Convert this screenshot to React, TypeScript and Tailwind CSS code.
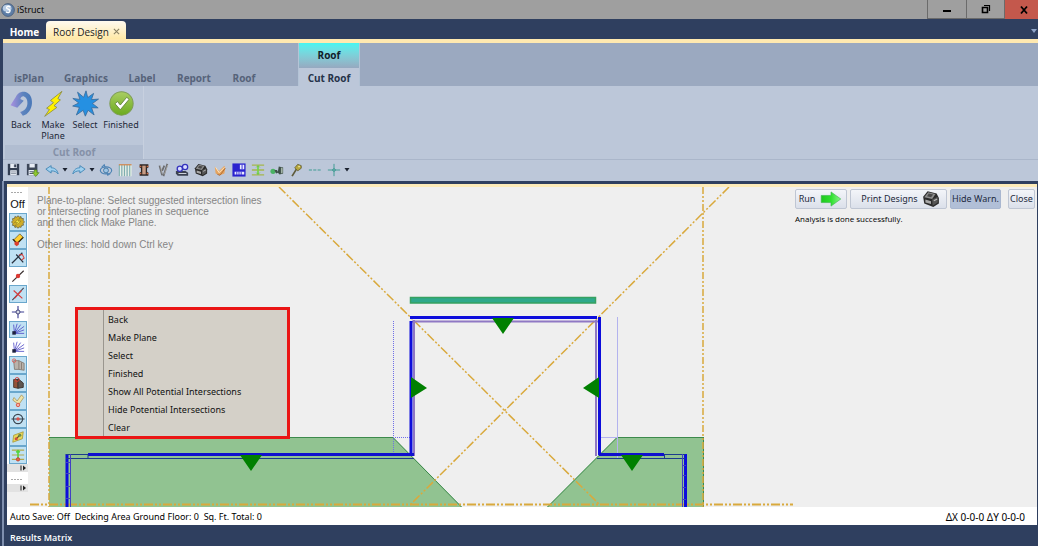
import type { ReactNode } from "react";
import { clsx } from "clsx";

function Icon({ children, className = "size-4" }: { children: ReactNode; className?: string }) {
  return (
    <svg viewBox="0 0 16 16" className={className} fill="none" aria-hidden="true">
      {children}
    </svg>
  );
}

function PrinterShape() {
  return (
    <>
      <path d="M1 6 5 1l8 2 2 4v5l-5 3-8-3z" fill="#2b2b2b" />
      <path d="M2 6.500 5.500 2l6.500 1.500L9 8z" fill="#8d8d8d" />
      <path d="M9 8.500 14 6v5l-4.500 3z" fill="#555" />
      <path d="M3 8.500 8 10v2.500L3 11z" fill="#a9a9a9" />
      <path d="m6 3 4 1-2 2.500-3.500-1z" fill="#4a4a4a" />
      <path d="m10.500 9.500 3-1.500" stroke="#bbb" />
    </>
  );
}

const quickTools: { label: string; drawing: ReactNode }[] = [
  {
    label: "Orbit",
    drawing: (
      <>
        <ellipse cx="8" cy="8.500" rx="6.500" ry="4" stroke="#4b82b4" strokeWidth="1.300" />
        <circle cx="8" cy="8.500" r="2.800" fill="#9cc4e4" stroke="#3a719f" />
        <path d="M3 5 6 2l1 3M13 12l-3 2-1-3" stroke="#4b82b4" strokeWidth="1.200" />
      </>
    ),
  },
  {
    label: "Studs",
    drawing: (
      <>
        <path d="M2.500 2v13M5.500 2v13M8.500 2v13M11.500 2v13M14.500 2v13" stroke="#e9f1e6" strokeWidth="2" />
        <path d="M1.500 2v13M4.500 2v13M7.500 2v13M10.500 2v13M13.500 2v13" stroke="#6aa5a3" />
        <path d="M1 2h14.500" stroke="#d08a56" strokeWidth="1.500" />
      </>
    ),
  },
  {
    label: "Post",
    drawing: (
      <>
        <path d="M3 1.500h10V5l-1.500 1v4l1.500 1v3.500H3V11l1.500-1V6L3 5z" fill="#2b2624" />
        <path d="M6 3h4v10H6z" fill="#c79b83" />
        <path d="M3 4h2M11 4h2M3 12h2M11 12h2" stroke="#c96b45" strokeWidth="1.500" />
      </>
    ),
  },
  {
    label: "Braces",
    drawing: (
      <>
        <path d="m4 3 3 11M13 1 8.500 15M9.500 3 7 9" stroke="#6c6d70" strokeWidth="2" />
        <path d="m5 3 2 9M13.500 2 9.500 13" stroke="#bdb8ae" strokeWidth=".7" />
      </>
    ),
  },
  {
    label: "Loads",
    drawing: (
      <>
        <path d="M1 9h11l3 2v3.500H3L1 12z" fill="#3b4250" />
        <path d="M4 12h9" stroke="#e1e6ee" />
        <circle cx="5.500" cy="6.500" r="3" fill="#d9ddff" stroke="#3432bd" strokeWidth="1.500" />
        <circle cx="11.500" cy="4.500" r="3" fill="#d9ddff" stroke="#3432bd" strokeWidth="1.500" />
      </>
    ),
  },
  { label: "Print", drawing: <PrinterShape /> },
  {
    label: "Connector",
    drawing: (
      <>
        <path d="m2 4 5 5 6-6 1 3-1 6-5 2-5-2z" fill="#e4a35f" />
        <path d="m3 5 4 6 6-6" stroke="#fff0d5" />
        <path d="m5 13 3 1 6-8" stroke="#a9642b" />
      </>
    ),
  },
  {
    label: "Plan view",
    drawing: (
      <>
        <rect x=".5" y=".5" width="15" height="15" fill="#2a22cf" />
        <path d="M9 2h5v5H9zM3 10h11v3H3z" fill="#e9eaff" />
        <path d="M11.500 2v5M5.500 10v4M8 10v4M10.500 10v4" stroke="#2a22cf" />
      </>
    ),
  },
  {
    label: "Floor section",
    drawing: (
      <>
        <path d="M1 2.500h14M1 8h14M1 13.500h14" stroke="#a5b84c" strokeWidth="1.500" />
        <path d="M8 3v10" stroke="#76d44b" strokeWidth="2" />
        <path d="m6 5 2-2 2 2M6 11l2 2 2-2" stroke="#6cc23f" />
      </>
    ),
  },
  {
    label: "Blocks",
    drawing: (
      <>
        <circle cx="3.500" cy="9.500" r="3" fill="#4bb264" />
        <path d="M5 8h3l1 2 1-6 5 1v7l-4 1-2-2-2 1z" fill="#3f5148" />
        <path d="m12.500 5 2 1v5l-2 1z" fill="#a3b3a7" />
      </>
    ),
  },
  {
    label: "Screwdriver",
    drawing: (
      <>
        <path d="m3.500 15 5-8" stroke="#5e5a3a" strokeWidth="2" />
        <path d="m6.500 5.500 3.500-4 4 1.500v3l-4 3z" fill="#b5a63c" stroke="#57522c" strokeWidth=".8" />
        <circle cx="11.500" cy="4" r="1" fill="#f0e7a0" />
      </>
    ),
  },
  {
    label: "Dashed line",
    drawing: <path d="M1 8h14" stroke="#3f9b93" strokeWidth="1.200" strokeDasharray="3.500 1.500" />,
  },
  {
    label: "Crosshair",
    drawing: <path d="M1 8h14M8 1v14M6 8l2-2 2 2-2 2z" stroke="#3f9b93" strokeWidth="1.100" />,
  },
];

function Rays() {
  return (
    <>
      <path d="M4 13 3 3M4 13 7 2M4 13l7-10M4 13l11-8M4 13l11-4M4 13h11" stroke="#4a45c4" strokeWidth=".9" />
      <rect x="1.500" y="10.500" width="4" height="4" fill="#1f2240" />
    </>
  );
}

const sideTools: { label: string; active: boolean; drawing: ReactNode }[] = [
  {
    label: "Snap settings",
    active: true,
    drawing: (
      <>
        <path
          d="m8 .8 1.300 1.700 2.100-.8.500 2.200 2.300.2-.4 2.200 1.700 1.600-1.700 1.500.5 2.200-2.200.4-.6 2.100-2.200-.5L8 15.200l-1.400-1.700-2.100.8-.6-2.200-2.200-.2.400-2.300L.6 8l1.500-1.500-.4-2.300 2.300-.3.500-2.200 2.100.8z"
          fill="#d0ad28"
          stroke="#6b6543"
          strokeWidth=".9"
        />
        <path d="m11 3-7 5.500h3.500L4.500 13l7-6H8z" fill="#fff04a" stroke="#7d6e1d" strokeWidth=".6" />
      </>
    ),
  },
  {
    label: "Endpoint",
    active: true,
    drawing: (
      <>
        <path d="m3 8 7-7 4 4-7 7z" fill="#ffce2e" stroke="#5a4a18" strokeWidth=".8" />
        <path d="m2 7 5 5 7-7" stroke="#33290e" strokeWidth="1.500" />
        <path d="M4 10h5v3l-2.500 2L4 13z" fill="#d93f30" />
      </>
    ),
  },
  {
    label: "Perpendicular",
    active: true,
    drawing: (
      <>
        <path d="M1 14 13 2M6 4l8 9" stroke="#27313f" strokeWidth="1.400" />
        <path d="m9 4.500 4-.5 2 4-3 2.500" stroke="#d6413e" strokeWidth="1.200" />
      </>
    ),
  },
  {
    label: "Midpoint",
    active: false,
    drawing: (
      <>
        <path d="M1.500 14.500 14.500 2" stroke="#3b3030" strokeWidth="1.300" />
        <circle cx="8" cy="8" r="2.500" fill="#dd3a34" />
      </>
    ),
  },
  {
    label: "Intersection",
    active: true,
    drawing: (
      <>
        <path d="M1.500 15 14.500 1" stroke="#3e4150" strokeWidth="1.200" />
        <path d="m3 4 10 9M4 13l8-9" stroke="#d93c3c" strokeWidth="1.300" />
      </>
    ),
  },
  {
    label: "Node",
    active: false,
    drawing: (
      <>
        <path d="M8 1v14M1 8h14" stroke="#3d3f94" strokeWidth="1.300" />
        <circle cx="8" cy="8" r="2.300" fill="#d8dbe6" stroke="#34356d" />
      </>
    ),
  },
  { label: "Angle snap", active: true, drawing: <Rays /> },
  { label: "Angle guide", active: false, drawing: <Rays /> },
  {
    label: "Wall outline",
    active: true,
    drawing: (
      <>
        <path d="M3 3h6l6 3v8l-6-1H4z" fill="#b9b2ab" stroke="#74695f" strokeWidth=".8" />
        <path d="M9 3v10M12 5v8" stroke="#857970" />
        <circle cx="3.500" cy="3" r="2" stroke="#df5b55" />
      </>
    ),
  },
  {
    label: "Wall solid",
    active: true,
    drawing: (
      <>
        <path d="M3 4h5v10l-5-1z" fill="#93543a" stroke="#49372e" />
        <path d="m8 3 6 5v5l-6 1z" fill="#5f5550" stroke="#36302d" />
        <circle cx="7" cy="4" r="2.300" stroke="#d63a33" />
      </>
    ),
  },
  {
    label: "Beam end",
    active: true,
    drawing: (
      <>
        <path d="m2 7 1.500-3L7 8l5-7 2.500 3L9 12z" fill="#efe3a8" stroke="#a38c4a" strokeWidth=".8" />
        <circle cx="8" cy="12.500" r="2" fill="#f3b3a0" stroke="#dd4c3f" />
      </>
    ),
  },
  {
    label: "Center",
    active: true,
    drawing: (
      <>
        <circle cx="8" cy="8" r="5.300" stroke="#3a4652" strokeWidth="1.300" />
        <path d="M.5 8h15" stroke="#3a4652" strokeWidth="1.200" />
        <circle cx="8" cy="8" r="2" fill="#d9504b" />
      </>
    ),
  },
  {
    label: "Panel",
    active: true,
    drawing: (
      <>
        <path d="m3 6 11-4-1 8-11 4z" fill="#e7d65a" stroke="#a08f2b" strokeWidth=".8" />
        <path d="m5 11 6-6" stroke="#5a4d23" strokeWidth="1.500" />
        <circle cx="10" cy="6" r="1.800" fill="#6a8d4b" />
        <circle cx="6" cy="10" r="1.800" fill="#d0503a" />
      </>
    ),
  },
  {
    label: "Level",
    active: true,
    drawing: (
      <>
        <path d="M1 2.500h14M1 8h14M1 13h14" stroke="#b3a94a" strokeWidth="1.300" />
        <path d="M8 3v9M6 5l2-2 2 2" stroke="#54d43c" strokeWidth="1.800" />
        <circle cx="8" cy="13" r="1.900" fill="#e06a4a" stroke="#c33e2c" />
      </>
    ),
  },
];

const ribbonActions: { label: string; width: string; drawing: ReactNode }[] = [
  {
    label: "Back",
    width: "w-8",
    drawing: (
      <>
        <defs>
          <linearGradient id="backArrow" x1="0" x2="1">
            <stop offset="0" stopColor="#a98fe0" />
            <stop offset=".6" stopColor="#5b83bd" />
            <stop offset="1" stopColor="#4a78b8" />
          </linearGradient>
        </defs>
        <path
          d="M1.500 9 4.600 4.200C5.500 1.800 8 .4 10.500 1.200c2.700.9 3.900 3.600 3.700 6.600-.2 3.600-2.300 6.700-5.400 7.400l-1.600-2.100c2.600-.6 4.200-2.500 4.300-5.200.1-2-.6-3.700-2-4.100-1.100-.3-1.900.5-2.200 1.600l2 1L5.500 10.500z"
          fill="url(#backArrow)"
        />
      </>
    ),
  },
  {
    label: "Make Plane",
    width: "w-8",
    drawing: (
      <path
        d="M13 .8 6.200 6.200 8 7.500 3.900 10.800l1.700.8-2.800 4L10 10.300 8.300 9.300l3.800-3.400-1.500-.8z"
        fill="#fff200"
        stroke="#8c8c3f"
        strokeWidth=".5"
      />
    ),
  },
  {
    label: "Select",
    width: "w-8",
    drawing: (
      <path
        d="m8.300.5 1 4L12.800 2l-1.300 3.700 4.200-.3-3.600 2.600 3.400 2.600-3.900-.1 1.500 4.300-3.600-2.800-1.600 3.500-1.300-3.500-4 2.800 1.800-4.500-4-.8 3.600-1.800L.5 5l4.200.6L3.300 1.300l3.600 3z"
        fill="#2590e2"
        stroke="#3b6d9d"
        strokeWidth=".5"
      />
    ),
  },
  {
    label: "Finished",
    width: "w-10",
    drawing: (
      <>
        <defs>
          <linearGradient id="doneFill" x1="0" y1="0" x2="0" y2="1">
            <stop offset="0" stopColor="#a9cd62" />
            <stop offset="1" stopColor="#6cab1f" />
          </linearGradient>
        </defs>
        <circle cx="8" cy="8" r="6.900" fill="url(#doneFill)" stroke="#7d9c55" strokeWidth=".6" />
        <path d="m4.200 8.200 1.400-1.400 1.700 2.100 3.800-4.600 1.400 1.200-5.200 6.200z" fill="#fff" stroke="#5f7d3c" strokeWidth=".5" />
      </>
    ),
  },
];

const menuItems = [
  "Back",
  "Make Plane",
  "Select",
  "Finished",
  "Show All Potential Intersections",
  "Hide Potential Intersections",
  "Clear",
];

function TitleBar() {
  return (
    <header className="flex h-[19px] shrink-0 items-stretch bg-[#9f9f9f] text-black">
      <div className="flex flex-1 items-center gap-0.5 pl-px">
        <svg viewBox="0 0 16 16" className="size-3.5" aria-hidden="true">
          <circle cx="8" cy="8" r="7.300" fill="#5d7da6" stroke="#4a5f7c" />
          <ellipse cx="7" cy="6" rx="5" ry="4" fill="#b9cde4" />
          <path d="M10.500 4.500c-2-1.500-4.500-.5-4 1.300.4 1.500 3.600 1.200 3.800 3.200.2 2-2.800 2.600-4.600 1.200" fill="none" stroke="#fff" strokeWidth="1.600" />
        </svg>
        <h1 className="text-[9px]">iStruct</h1>
      </div>
      <button aria-label="Minimize" className="flex w-[39px] items-center justify-center border-b border-l border-[#6b6b6b]">
        <svg viewBox="0 0 10 10" className="size-2.5"><path d="M1 7h8" stroke="#000" strokeWidth="2" /></svg>
      </button>
      <button aria-label="Restore" className="flex w-[38px] items-center justify-center border-b border-l border-[#6b6b6b]">
        <svg viewBox="0 0 10 10" className="size-2.5" fill="none" stroke="#000">
          <path d="M1.500 3.500h5v5h-5z" strokeWidth="1.600" />
          <path d="M3 1.500h5.500V7" strokeWidth="1.200" />
        </svg>
      </button>
      <button aria-label="Close window" className="flex w-[34px] items-center justify-center border-l border-[#6b6b6b] bg-[#c4584c] pl-1">
        <svg viewBox="0 0 10 10" className="size-2.5"><path d="m2 1.500 6 7M8 1.500l-6 7" stroke="#000" strokeWidth="1.800" /></svg>
      </button>
    </header>
  );
}

function DocumentTabs() {
  return (
    <nav className="flex h-5 shrink-0 items-end bg-[#2f3f5f] pr-px pl-[3px] text-[10px]">
      <a href="#home" className="flex h-[18px] w-[43px] items-center justify-center pt-1 font-bold text-white">Home</a>
      <div className="flex h-[18px] w-20 items-center justify-between rounded-t-sm bg-linear-to-b from-[#fffaf0] to-[#ffe9a6] pr-1.5 pl-[7px] text-[#222]">
        <a href="#roof-design" className="pt-1">Roof Design</a>
        <button aria-label="Close tab" className="pt-0.5">
          <svg viewBox="0 0 8 8" className="size-[7px]"><path d="m1 1 6 6M7 1 1 7" stroke="#8b8264" strokeWidth="1.300" /></svg>
        </button>
      </div>
      <div className="flex-1" />
      <button aria-label="Tab list" className="pb-1.5">
        <svg viewBox="0 0 6 4" className="h-1 w-1.5"><path d="M0 0h6L3 4z" fill="#8fa4c8" /></svg>
      </button>
    </nav>
  );
}

function Ribbon() {
  return (
    <section className="shrink-0 border-l-[3px] border-[#2f3f5f] bg-[#bcc7d9]">
      <div className="flex h-[47px] items-end border-t-4 border-[#ffe9b0] bg-[#9ba9c0] text-[10px] font-bold text-[#56637a]">
        <nav className="flex h-[18px] w-[295px] items-center pt-0.5">
          <a href="#isplan" className="w-[52px] text-center">isPlan</a>
          <a href="#graphics" className="w-[62px] text-center">Graphics</a>
          <a href="#label" className="w-[50px] text-center">Label</a>
          <a href="#report" className="w-[54px] text-center">Report</a>
          <a href="#roof" className="w-[46px] text-center">Roof</a>
        </nav>
        <div className="flex h-full w-[62px] flex-col border-x border-[#b4c4d6] text-center text-[#26334a]">
          <div className="flex h-[25px] items-center justify-center bg-linear-to-b from-[#45f5f1] to-[#96a9c0] text-[#10202c]">Roof</div>
          <a href="#cut-roof" className="flex flex-1 items-center justify-center bg-[#bcc7d9] pt-0.5">Cut Roof</a>
        </div>
      </div>
      <div className="flex h-[73px]">
        <div className="flex w-[141px] flex-col justify-between border-r border-[#c7d0df] pl-0.5">
          <div className="flex pt-1">
            {ribbonActions.map((action) => (
              <button
                key={action.label}
                className={clsx(
                  "flex flex-col items-center gap-0.5 font-[Noto_Sans,sans-serif] text-[9px] leading-[11px] text-[#1d2738]",
                  action.width,
                )}
              >
                <Icon className="size-[27px] shrink-0">{action.drawing}</Icon>
                <span>{action.label}</span>
              </button>
            ))}
          </div>
          <div className="flex h-3.5 items-center justify-center bg-[#b1bdd1] text-[10px] font-bold text-[#8591a8]">Cut Roof</div>
        </div>
      </div>
      <div className="flex h-[22px] items-center border-t border-[#aab6ca] pb-0.5 pl-px">
        <button aria-label="Save" className="flex w-[19px] justify-center">
          <Icon className="size-[13px]">
            <path d="M1 1h14v14H1z" fill="#333e52" />
            <path d="M4 1h8v5H4zM4 9h8v6H4z" fill="#e8edf5" />
            <path d="M9 2h2v3H9zM5 11h6M5 13h6" fill="#333e52" stroke="#333e52" strokeWidth=".6" />
          </Icon>
        </button>
        <button aria-label="Save as" className="flex w-5 justify-center">
          <Icon className="size-3.5">
            <path d="M1 1h12v13H1z" fill="#3d4759" />
            <path d="M4 1h6v4H4zM3 8h7v6H3z" fill="#e8edf5" />
            <path d="M4 10h5M4 12h5" stroke="#3d4759" />
            <path d="M9.500 8h3v3H15l-4 4.500L7.500 11h2z" fill="#8fc92e" stroke="#52811a" strokeWidth=".7" />
          </Icon>
        </button>
        <button aria-label="Undo" className="flex w-[18px] justify-center">
          <Icon className="size-3.5">
            <path d="m1 7 6-4v2.500c4 0 7 2 8 7-2-2.500-4-3.500-8-3.500v2.500z" fill="#9fd0ef" stroke="#3f84b4" />
          </Icon>
        </button>
        <Caret />
        <button aria-label="Redo" className="flex w-[19px] justify-center">
          <Icon className="size-3.5">
            <path d="M15 7 9 3v2.500c-4 0-7 2-8 7 2-2.500 4-3.500 8-3.500v2.500z" fill="#9fd0ef" stroke="#3f84b4" />
          </Icon>
        </button>
        <Caret />
        {quickTools.map((tool) => (
          <button key={tool.label} aria-label={tool.label} className="flex w-[19px] justify-center">
            <Icon className="size-3.5">{tool.drawing}</Icon>
          </button>
        ))}
        <Caret />
      </div>
    </section>
  );
}

function Caret() {
  return (
    <button aria-label="More options" className="flex w-2 justify-center">
      <svg viewBox="0 0 6 4" className="h-1 w-1.5"><path d="M.5 0h5L3 3.500z" fill="#1b2230" /></svg>
    </button>
  );
}

function RoofPlan() {
  return (
    <svg viewBox="0 0 1030 320" className="absolute top-0 left-0 h-[320px] w-[1030px]" fill="none" role="img" aria-label="Roof plan">
      <g transform="translate(-7 -187)">
        <path d="M49 437h344l69 70H49zM703 437h-86l-70 70h156z" fill="#91c391" />
        <path d="M49 437.500h344l69 70M703 437.500h-86l-70 70M703.500 437v70" stroke="#3c8a4c" />

        <g stroke="#d9a93c" strokeWidth="1.500">
          <path d="M49 187v320M703 187v320" strokeDasharray="7 2 2 2 2 2" />
          <path d="M30 504.500h763" strokeDasharray="9 2 2 2 2 2" strokeWidth="2" />
          <path d="m279 187 321 318M729 187 410 505" strokeDasharray="9 2 2 2 2 2" />
        </g>

        <path d="M410.500 297.500h185v5.500h-185z" fill="#2fa98b" stroke="#36a160" strokeWidth="1.500" />

        <path d="M393.500 321v134M393 437.500h18" stroke="#6f6fe8" strokeDasharray="1 1" />
        <path d="M617.500 317v141M600 437.500h17" stroke="#b3b3ee" />
        <path d="M412 321.500h186M414 320v136M596 320v136" stroke="#8f78c4" strokeWidth="2" />
        <g stroke="#0d0ddc" strokeWidth="3">
          <path d="M410 317.500h187M411 321v134M599.500 317v138" />
          <path d="M88 454.500h326M599 454.500h65" stroke="#1010ce" />
          <path d="M67 454v53M685.500 454v53" />
        </g>
        <g stroke="#1b3c8c">
          <path d="M66 458.500h348M66 454.500h22v4M597 458.500h88M664 454.500h21M664.500 454v4" />
        </g>
        <path
          d="M70.500 454v53M682.500 454v53M66 462.500h4M66 473.500h4M66 486.500h4M66 498.500h4M682 465.500h4M682 475.500h4M682 487.500h4M682 499.500h4"
          stroke="#4340c4"
        />
        <path
          d="M492 318h22l-11 16zM411 377l16 11-16 10zM599 377l-16 11 16 10zM240 455h22l-11 16zM621 455h22l-11 16z"
          fill="#008000"
        />
      </g>
    </svg>
  );
}

function SnapToolbar() {
  return (
    <aside className="relative flex w-[21px] shrink-0 flex-col self-start bg-white text-[#111]">
      <Grip className="h-2" />
      <button className="h-[18px] font-[Liberation_Sans,Arial,sans-serif] text-[11px]">Off</button>
      <div className="flex h-[251px] flex-col pr-px pl-0.5">
        {sideTools.map((tool) => (
          <button
            key={tool.label}
            aria-label={tool.label}
            aria-pressed={tool.active}
            className={clsx(
              "flex min-h-0 flex-1 items-center justify-center border",
              tool.active ? "border-[#6aa7cc] bg-[#c0e1f3]" : "border-transparent",
            )}
          >
            <Icon className="size-3.5">{tool.drawing}</Icon>
          </button>
        ))}
      </div>
      <Overflow />
      <Grip className="h-3" />
      <Overflow />
    </aside>
  );
}

function Grip({ className }: { className: string }) {
  return (
    <svg viewBox="0 0 20 8" className={clsx("w-5 shrink-0", className)} aria-hidden="true">
      <path d="M4 5.500h12" stroke="#a9a9a9" strokeDasharray="2 1" />
    </svg>
  );
}

function Overflow() {
  return (
    <button aria-label="Toolbar options" className="flex h-2 items-center justify-end bg-[#e2e2e2] pr-0.5">
      <svg viewBox="0 0 6 6" className="size-1.5"><path d="M1 .5v5" stroke="#222" /><path d="m3 .5 3 2.500-3 2.500z" fill="#222" /></svg>
    </button>
  );
}

const actionButton =
  "flex h-5 items-center justify-center rounded-xs border border-[#bfc6d3] bg-linear-to-b from-[#f3f5f9] to-[#dbe0ea]";

function Workspace() {
  return (
    <main className="relative flex min-h-[320px] flex-1 overflow-hidden bg-[#efefef]">
      <RoofPlan />
      <SnapToolbar />
      <div className="relative flex flex-1 items-start justify-between pl-[9px]">
        <div>
          <p className="pt-2 font-[Liberation_Sans,Arial,sans-serif] text-[10px] leading-[11px] whitespace-pre text-[#858585]">
            {"Plane-to-plane: Select suggested intersection lines\nor intersecting roof planes in sequence\nand then click Make Plane.\n\nOther lines: hold down Ctrl key"}
          </p>
          <menu className="absolute top-[120px] left-[47px] w-[215px] border-[3px] border-[#ea1515] bg-[#d4d0c8] pl-[25px]">
            {menuItems.map((item) => (
              <li key={item} className="flex h-[18px] border-l border-[#9a968f] pt-px pl-1">
                <button className="font-[Noto_Sans,sans-serif] text-[9px] text-[#111]">{item}</button>
              </li>
            ))}
          </menu>
        </div>
        <div className="pt-0.5 pr-0.5 font-[Noto_Sans,sans-serif] text-[9px] text-[#1e2a3d]">
          <div className="flex gap-[3px]">
            <button className={clsx(actionButton, "w-[52px] gap-1")}>
              Run
              <svg viewBox="0 0 24 18" className="h-4 w-6" aria-hidden="true">
                <defs>
                  <linearGradient id="runFill" x1="0" x2="1">
                    <stop offset="0" stopColor="#1fc71f" />
                    <stop offset=".5" stopColor="#2ee02e" />
                    <stop offset="1" stopColor="#8bf58b" />
                  </linearGradient>
                </defs>
                <path d="M1 5h11V1l11 8-11 8v-4H1z" fill="url(#runFill)" stroke="#39b54a" strokeWidth=".7" />
              </svg>
            </button>
            <button className={clsx(actionButton, "w-[97px] gap-1 pl-1")}>
              Print Designs
              <Icon className="size-[18px]"><PrinterShape /></Icon>
            </button>
            <button className="flex h-5 w-[51px] items-center justify-center rounded-xs border border-[#a9b7d0] bg-[#b1bfd7] whitespace-nowrap">Hide Warn.</button>
            <button className={clsx(actionButton, "ml-1 w-[27px]")}>Close</button>
          </div>
          <p className="pt-1 font-[Open_Sans,sans-serif] text-[8px] leading-3 text-black">Analysis is done successfully.</p>
        </div>
      </div>
    </main>
  );
}

export default function App() {
  return (
    <div className="flex min-h-screen flex-col bg-[#2f3f5f] font-[Open_Sans,Noto_Sans,sans-serif]">
      <TitleBar />
      <DocumentTabs />
      <Ribbon />
      <div className="flex flex-1 flex-col pl-0.5">
        <div className="flex flex-1 flex-col border-l-2 border-[#7f8fae] pt-[3px] pr-px pl-[3px]">
          <div className="h-[3px] bg-[#fdebb9]" />
          <Workspace />
          <footer className="flex h-[18px] shrink-0 items-center justify-between bg-white pr-3 pl-[3px] font-[Noto_Sans,sans-serif] text-[9px] text-black">
            <span className="pt-0.5 whitespace-pre">Auto Save: Off  Decking Area Ground Floor: 0  Sq. Ft. Total: 0</span>
            <span className="pt-0.5 text-[10px]">ΔX 0-0-0 ΔY 0-0-0</span>
          </footer>
          <div className="flex h-[21px] shrink-0 items-center pt-1 pl-[3px]">
            <h2 className="text-[9px] font-semibold text-white">Results Matrix</h2>
          </div>
        </div>
      </div>
    </div>
  );
}
